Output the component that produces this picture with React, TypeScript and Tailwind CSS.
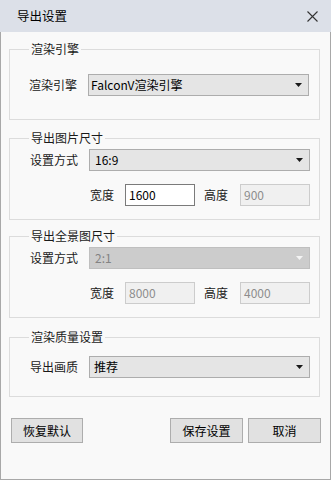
import type { ReactNode } from "react";

const font = { fontFamily: '"Noto Sans CJK SC", "Noto Sans", sans-serif' };

function Arrow({ disabled }: { disabled?: boolean }) {
  return (
    <svg width="7" height="4" viewBox="0 0 7 4" className="mr-[6px] shrink-0">
      <path d="M0 0h7L3.5 4z" fill={disabled ? "#f4f4f4" : "#1a1a1a"} />
    </svg>
  );
}

function Select({ value, disabled, className }: { value: string; disabled?: boolean; className?: string }) {
  return (
    <div
      className={
        "flex h-[22px] w-[221px] items-center justify-between border " +
        (disabled ? "border-[#bfbfbf] bg-[#cccccc] text-[#838383] " : "border-[#adadad] bg-[#e5e5e5] text-black ") +
        (className ?? "")
      }
    >
      <span className="leading-4">{value}</span>
      <Arrow disabled={disabled} />
    </div>
  );
}

function Input({ value, disabled }: { value: string; disabled?: boolean }) {
  return (
    <div
      className={
        "flex h-[22px] w-[70px] items-center border pl-[3px] leading-4 " +
        (disabled ? "border-[#cccccc] bg-[#f0f0f0] text-[#8d8d8d]" : "border-[#7a7a7a] bg-white text-black")
      }
    >
      {value}
    </div>
  );
}

function Group({ title, className, children }: { title: string; className: string; children: ReactNode }) {
  return (
    <fieldset className={"w-[311px] border border-[#dcdcdc] " + className}>
      <legend className="ml-[19px] px-[2px] leading-4 text-[#1a1a1a]">{title}</legend>
      {children}
    </fieldset>
  );
}

function SizeRow({ w, h, disabled }: { w: string; h: string; disabled?: boolean }) {
  return (
    <div className="flex items-center pl-[80px]">
      <span className="w-[24px] leading-4">宽度</span>
      <div className="ml-[11px]">
        <Input value={w} disabled={disabled} />
      </div>
      <span className="ml-[9px] w-[24px] leading-4">高度</span>
      <div className="ml-[12px]">
        <Input value={h} disabled />
      </div>
    </div>
  );
}

function Button({ label, className }: { label: string; className?: string }) {
  return (
    <button
      className={
        "flex h-[25px] w-[72px] items-center justify-center border border-[#adadad] bg-[#e1e1e1] leading-4 text-black " +
        (className ?? "")
      }
    >
      {label}
    </button>
  );
}

export default function App() {
  return (
    <div className="flex h-[480px] w-[331px] flex-col text-[12px] text-[#1a1a1a]" style={font}>
      <div className="flex h-[32px] shrink-0 items-center justify-between bg-[#dce0e8] pl-[17px] pr-[13px]">
        <span className="text-[12.5px] leading-4 text-black">导出设置</span>
        <svg width="11" height="11" viewBox="0 0 11 11">
          <path d="M0.5 0.5l10 10M10.5 0.5l-10 10" stroke="#333" strokeWidth="1.1" />
        </svg>
      </div>
      <div className="flex flex-1 flex-col border-x border-b border-[#a8a8a8] bg-[#f9f9f9] pl-[8px]">
        <Group title="渲染引擎" className="mt-[9px] pb-[23px] pt-[17px]">
          <div className="flex items-center pl-[19px]">
            <span className="w-[48px] leading-4">渲染引擎</span>
            <Select value="FalconV渲染引擎" className="ml-[11px] pl-[2px]" />
          </div>
        </Group>

        <Group title="导出图片尺寸" className="mt-[10px] pb-[13px] pt-[3px]">
          <div className="flex items-center pl-[20px]">
            <span className="w-[48px] leading-4">设置方式</span>
            <Select value="16:9" className="ml-[11px] pl-[5px]" />
          </div>
          <div className="mt-[13px]">
            <SizeRow w="1600" h="900" />
          </div>
        </Group>

        <Group title="导出全景图尺寸" className="mt-[8px] pb-[13px] pt-[3px]">
          <div className="flex items-center pl-[20px]">
            <span className="w-[48px] leading-4">设置方式</span>
            <Select value="2:1" disabled className="ml-[11px] pl-[5px]" />
          </div>
          <div className="mt-[13px]">
            <SizeRow w="8000" h="4000" disabled />
          </div>
        </Group>

        <Group title="渲染质量设置" className="mt-[11px] pb-[18px] pt-[11px]">
          <div className="flex items-center pl-[20px]">
            <span className="w-[48px] leading-4">导出画质</span>
            <Select value="推荐" className="ml-[11px] pl-[4px]" />
          </div>
        </Group>

        <div className="mt-[21px] flex items-center pl-[2px] pr-[9px]">
          <Button label="恢复默认" />
          <Button label="保存设置" className="ml-auto w-[73px]" />
          <Button label="取消" className="ml-[5px] w-[73px]" />
        </div>
      </div>
    </div>
  );
}
